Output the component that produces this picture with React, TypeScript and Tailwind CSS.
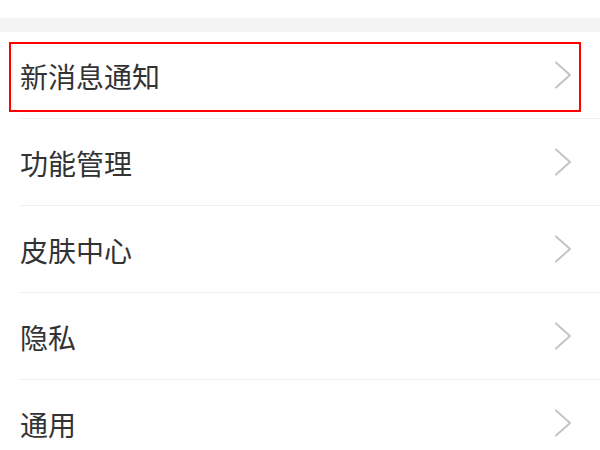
const items = ["新消息通知", "功能管理", "皮肤中心", "隐私", "通用"];

function Chevron() {
  return (
    <svg width="18" height="28" viewBox="0 0 18 28" fill="none">
      <path d="M2 1.5 L16 14 L2 26.5" stroke="#c4c4c4" strokeWidth="2" strokeLinecap="round" strokeLinejoin="round" />
    </svg>
  );
}

export default function App() {
  return (
    <div
      className="w-[600px] h-[450px] overflow-hidden bg-white"
      style={{ fontFamily: '"Noto Sans CJK SC", "Noto Sans", sans-serif' }}
    >
      <div className="h-[18px] bg-white" />
      <div className="h-[14px] bg-[#f4f4f4]" />
      {items.map((label, i) => (
        <div key={label}>
          {i > 0 && <div className="h-px ml-[20px] bg-[#efefef]" />}
          <div className="relative flex items-center justify-between h-[86px] pl-[20px] pr-[28px]">
            <span className="text-[28px] leading-none text-[#333333] translate-y-[1px]">{label}</span>
            <Chevron />
            {i === 0 && (
              <div className="absolute left-[9px] right-[19px] top-[10px] bottom-[6px] border-2 border-[#ff0000]" />
            )}
          </div>
        </div>
      ))}
    </div>
  );
}
